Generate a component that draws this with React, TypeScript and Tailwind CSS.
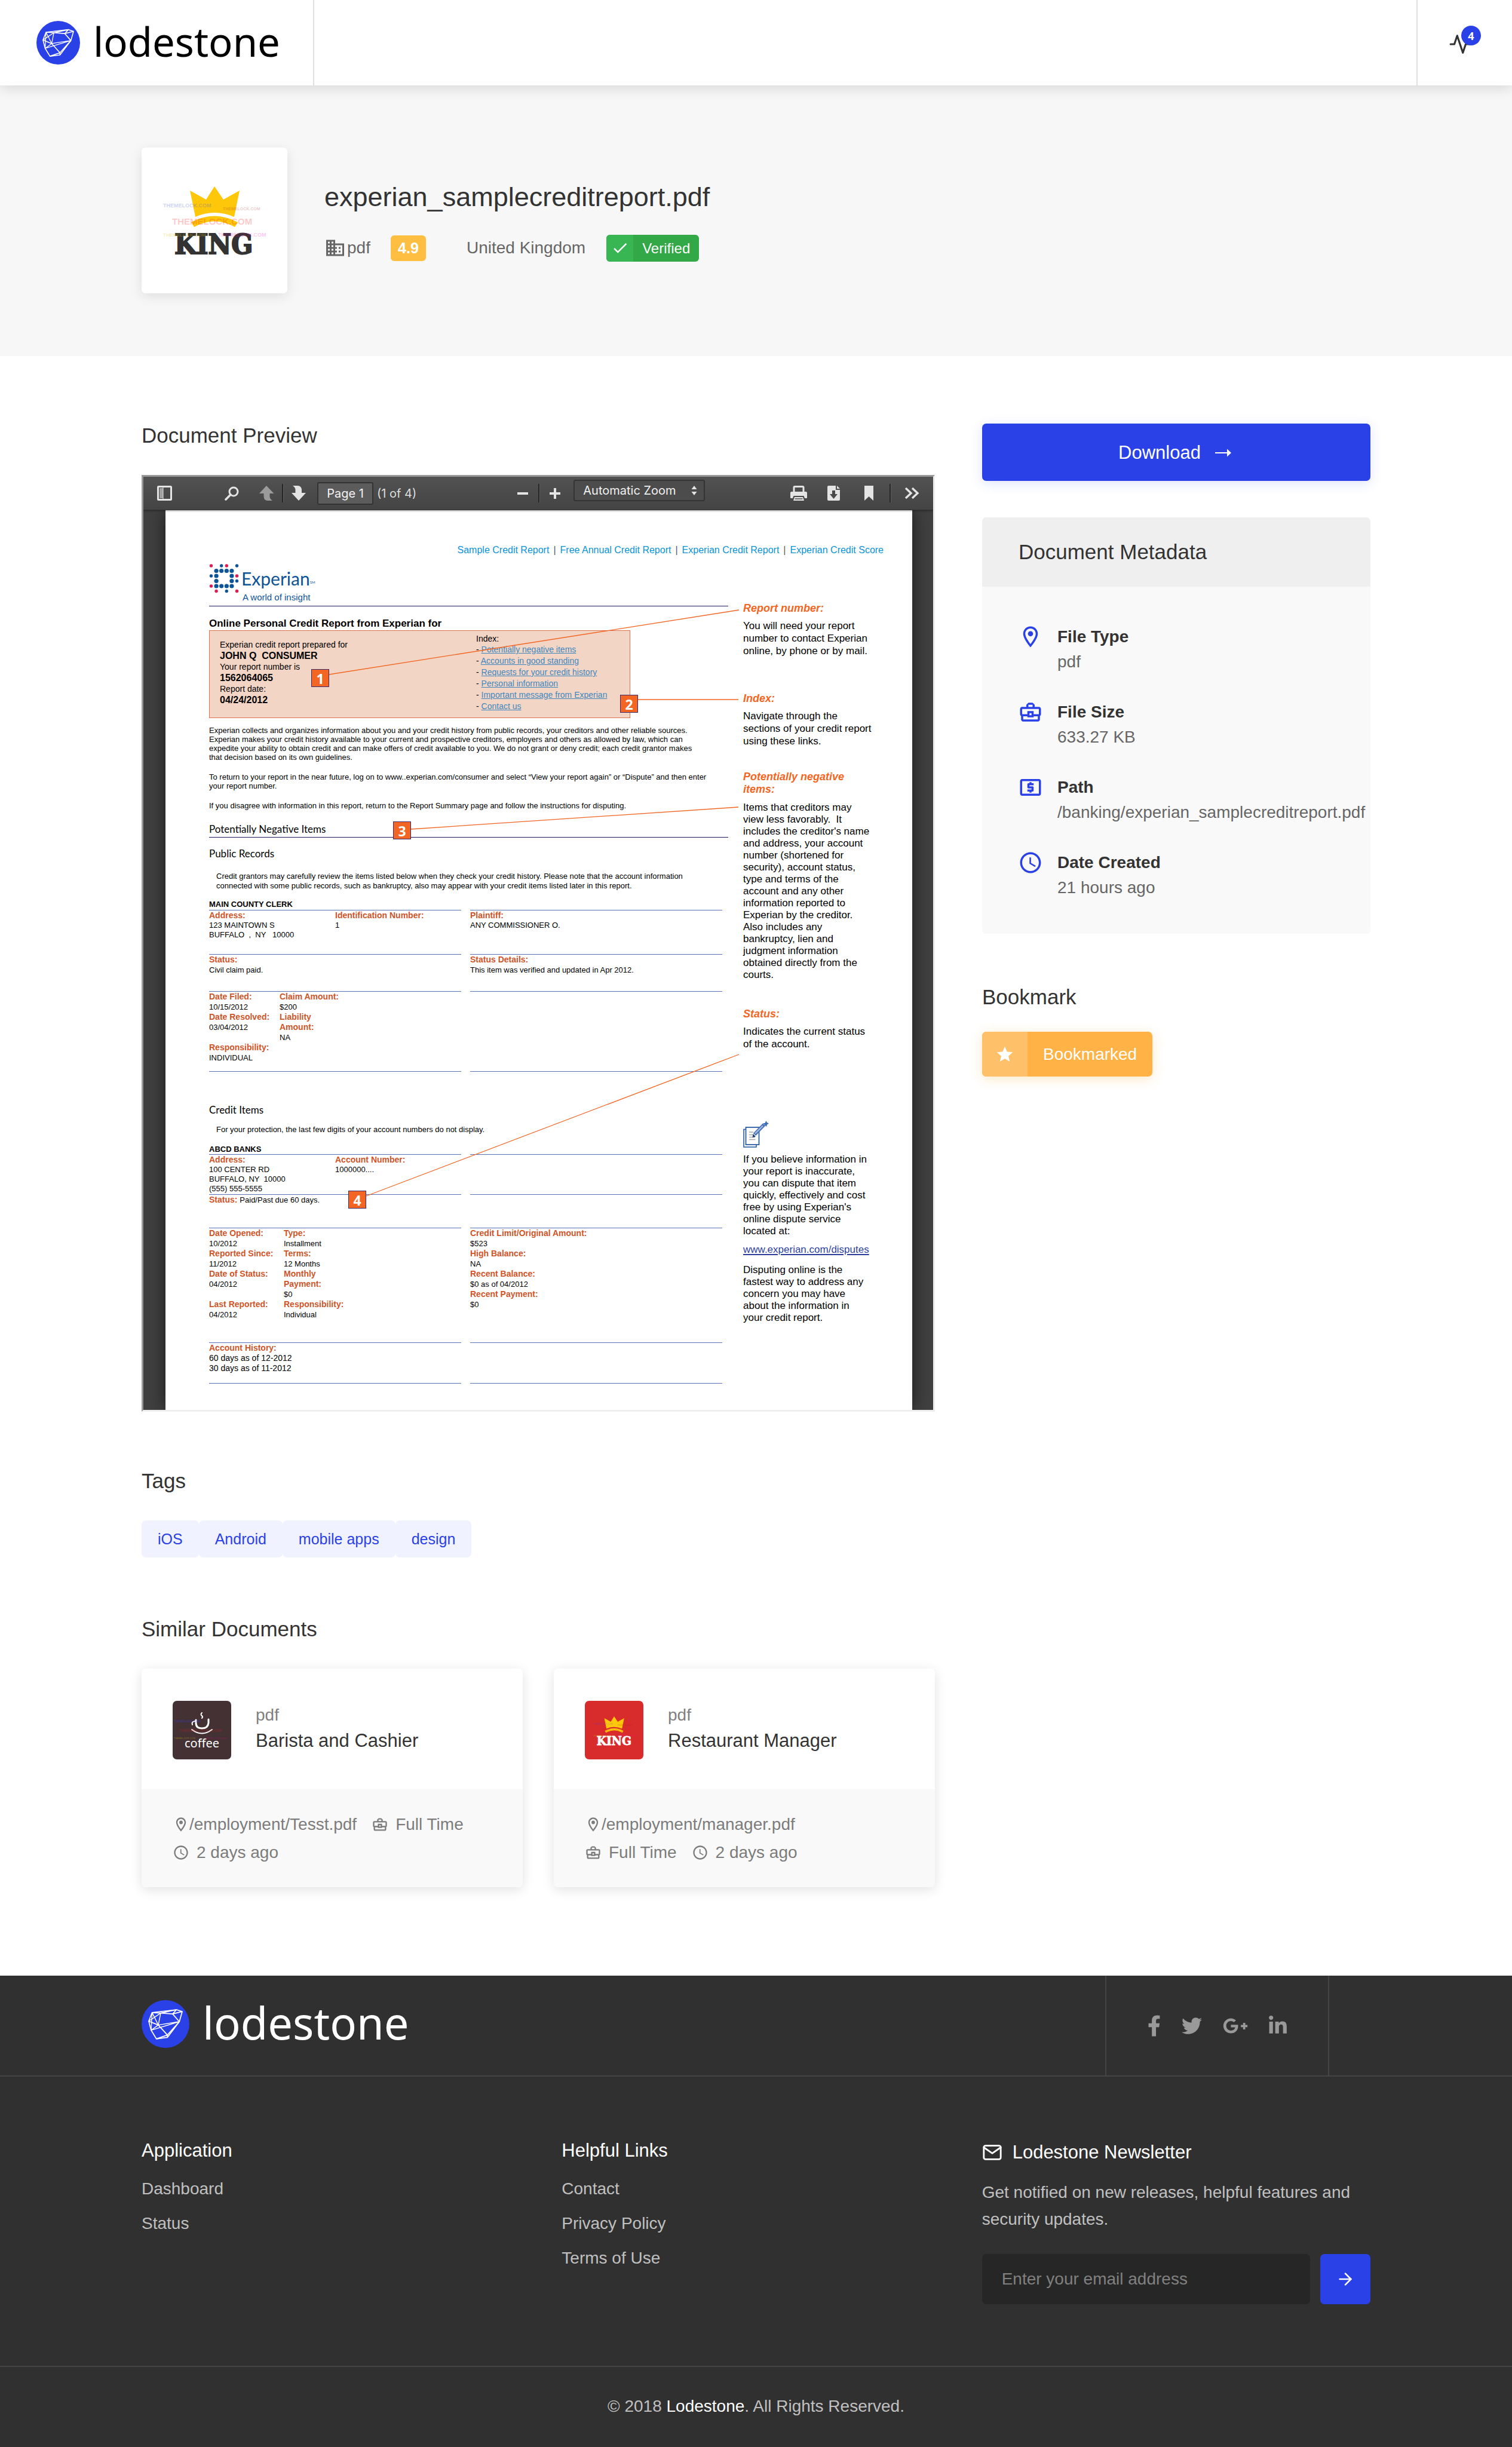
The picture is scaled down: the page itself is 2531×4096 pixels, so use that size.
import React from "react";
import { FaFacebookF, FaGooglePlusG, FaLinkedinIn, FaTwitter } from "react-icons/fa";
import { FiActivity, FiArrowRight, FiMail } from "react-icons/fi";
import {
  MdAccessTime,
  MdCheck,
  MdOutlineBusiness,
  MdOutlineBusinessCenter,
  MdOutlineLocalAtm,
  MdOutlineLocationOn,
  MdStar,
} from "react-icons/md";

/* ---------- logos and drawings ---------- */

function LodestoneMark({ className }: { className: string }) {
  return (
    <svg viewBox="0 0 100 100" className={className} aria-hidden="true">
      <circle cx="50" cy="50" r="50" fill="#2a41e8" />
      <g fill="none" stroke="#fff" strokeWidth="2.2" strokeLinejoin="round">
        <path d="M22 26 L73 20 L85 24 L79 45 L54 78 L31 81 L20 63 L15 44 Z" />
        <path d="M22 26 L40 27 L65 29 L85 24 M73 20 L65 29 L79 45 M40 27 L73 20" />
        <path d="M15 44 L40 27 L35 52 L22 26 L20 63 L35 52 L79 45 L20 63" strokeWidth="1.8" />
        <path d="M15 44 L35 52 L54 73 L79 45 M54 73 L31 81 M54 73 L54 78" />
      </g>
    </svg>
  );
}

function Wordmark({ dark }: { dark?: boolean }) {
  return dark ? (
    <span className="flex items-center gap-[22px]">
      <LodestoneMark className="size-[80px]" />
      <span className="pb-1 font-['Noto_Sans',sans-serif] text-[74px] leading-[80px] text-white">lodestone</span>
    </span>
  ) : (
    <span className="flex items-center gap-[22px]">
      <LodestoneMark className="size-[73px]" />
      <span className="pb-1 font-['Noto_Sans',sans-serif] text-[67px] leading-[73px] text-black">lodestone</span>
    </span>
  );
}

type KingProps = {
  className: string;
  background: string;
  ink: string;
  textSize: number;
  textX: number;
  textY: number;
};

function KingLogo({ className, background, ink, textSize, textX, textY }: KingProps) {
  return (
    <svg viewBox="0 0 244 244" className={className} role="img" aria-label="King">
      <rect width="244" height="244" fill={background} />
      <g fill="#fec70a">
        <path d="M81 72 L108 87 L122 65 L137 87 L164 72 L155 116 Q122 102 90 116 Z" />
        <path d="M83 125 Q122 104 161 125 L156 133 Q122 114 88 133 Z" />
      </g>
      <text
        x={textX}
        y={textY}
        fontFamily="'DejaVu Serif Condensed', 'DejaVu Serif', serif"
        fontWeight="700"
        fontSize={textSize}
        fill={ink}
        stroke={ink}
        strokeWidth="2"
      >
        KING
      </text>
      <g fontFamily="'Liberation Sans', sans-serif" fontWeight="700">
        <text x="36" y="100" fontSize="9" fill="#2a41e8" fillOpacity="0.25">THEMELOCK.COM</text>
        <text x="136" y="105" fontSize="7" fill="#a02020" fillOpacity="0.25">THEMELOCK.COM</text>
        <text x="51" y="129" fontSize="15" fill="#ff2020" fillOpacity="0.25">THEMELOCK.COM</text>
        <text x="36" y="149" fontSize="8" fill="#e0c000" fillOpacity="0.3">THEMELOCK.COM</text>
        <text x="128" y="149" fontSize="9" fill="#ff00c0" fillOpacity="0.25">THEMELOCK.COM</text>
      </g>
    </svg>
  );
}

function CoffeeLogo({ className }: { className: string }) {
  return (
    <svg viewBox="0 0 98 98" className={className} role="img" aria-label="Coffee">
      <rect width="98" height="98" fill="#443133" />
      <g fill="none" stroke="#fff" strokeWidth="3" strokeLinecap="round">
        <path d="M39 32 V37 Q39 46 49 46 Q59 46 60 37 V31" />
        <path d="M39 34 Q31 34 33 40" strokeWidth="2" />
        <path d="M32 48 Q49 61 66 48" strokeWidth="2" />
        <path d="M49 20 Q46 23 49 25 Q51 27 49 29" strokeWidth="2" />
      </g>
      <text x="20" y="78" fontFamily="'Noto Sans', sans-serif" fontSize="20" fill="#fff">coffee</text>
      <g fontFamily="'Liberation Sans', sans-serif" fontWeight="700">
        <text x="2" y="36" fontSize="5" fill="#2a41e8" fillOpacity="0.4">THEMELOCK.COM</text>
        <text x="10" y="52" fontSize="8" fill="#d02020" fillOpacity="0.3">THEMELOCK.COM</text>
        <text x="2" y="64" fontSize="4" fill="#e0c000" fillOpacity="0.3">THEMELOCK.COM</text>
        <text x="54" y="64" fontSize="4" fill="#d00090" fillOpacity="0.3">THEMELOCK.COM</text>
      </g>
    </svg>
  );
}

const dots: [number, number, string][] = [
  [0, 0, "r"], [2, 0, "b"], [3, 0, "r"], [5, 0, "b"],
  [1, 1, "B"], [2, 1, "B"], [3, 1, "B"], [4, 1, "B"],
  [0, 2, "b"], [1, 2, "B"], [4, 2, "B"], [5, 2, "r"],
  [1, 3, "B"], [4, 3, "B"], [5, 3, "b"],
  [0, 4, "r"], [1, 4, "B"], [2, 4, "B"], [3, 4, "B"], [4, 4, "B"],
  [1, 5, "r"], [3, 5, "b"], [5, 5, "r"],
];

function ExperianDots() {
  return (
    <svg viewBox="0 0 50 49" className="h-[49px] w-[50px]" aria-hidden="true">
      {dots.map(([c, r, kind]) => (
        <circle
          key={`${c}-${r}`}
          cx={3.5 + c * 8.6}
          cy={3 + r * 8.5}
          r={kind === "B" ? 3.6 : 2.7}
          fill={kind === "r" ? "#e11b54" : "#0d5498"}
        />
      ))}
    </svg>
  );
}

function DisputeIcon() {
  return (
    <svg viewBox="0 0 43 45" className="h-[45px] w-[43px]" aria-hidden="true">
      <rect x="1" y="14.500" width="21" height="29.500" fill="#fff" stroke="#2b5ea6" strokeWidth="1.600" />
      <rect x="4.500" y="11" width="22" height="29" fill="#fff" stroke="#2b5ea6" strokeWidth="1.800" />
      <path d="M10 19 H17 M10 23.500 H17 M10 27.500 H20 M10 31.500 H20.500" stroke="#a8a8a8" strokeWidth="1.600" />
      <path d="M19 23 L35 6.500" stroke="#4a72b8" strokeWidth="6" />
      <path d="M20 21.500 L33 8.500" stroke="#a9bde0" strokeWidth="2" />
      <path d="M15.500 28 L16.500 22 L21 26.500 Z" fill="#1e3f7c" />
      <path d="M33 4 L36.500 4 L38.500 0 L40 3 L43 4.500 L40 6.500 L39 10 Z" fill="#3f6bbb" />
    </svg>
  );
}

/* ---------- document page ---------- */

const bodyText = "text-[13px] whitespace-pre";
const label = "text-[14px] leading-[17px] font-bold text-[#cf5428] whitespace-pre";

type Line = { t?: string; v?: string; big?: boolean; tight?: boolean };

function Fields({ lines }: { lines: Line[] }) {
  return (
    <div>
      {lines.map((l, i) =>
        l.t !== undefined ? (
          <p key={i} className={label}>{l.t}</p>
        ) : l.big ? (
          <p key={i} className="text-[14px] leading-[17px] whitespace-pre">{l.v}</p>
        ) : l.tight ? (
          <p key={i} className="text-[13px] leading-4 whitespace-pre">{l.v}</p>
        ) : (
          <p key={i} className="min-h-[17px] text-[13px] leading-[17px] whitespace-pre">{l.v}</p>
        ),
      )}
    </div>
  );
}

function RecordRow({ className, left, right }: { className: string; left?: React.ReactNode; right?: React.ReactNode }) {
  return (
    <div className={`grid grid-cols-2 gap-[15px] pr-[10px] ${className}`}>
      <div className="border-t border-[#5b74b9]">{left}</div>
      <div className="border-t border-[#5b74b9]">{right}</div>
    </div>
  );
}

function SideNote({ title, children, className }: { title: string; children: string; className: string }) {
  return (
    <div className={className}>
      <h4 className="text-[18px] leading-[21px] font-bold whitespace-pre text-[#f26522] italic">{title}</h4>
      <p className="mt-2 text-[17px] leading-[21px] whitespace-pre">{children}</p>
    </div>
  );
}

const headerLinks = ["Sample Credit Report", "Free Annual Credit Report", "Experian Credit Report", "Experian Credit Score"];
const indexLinks = [
  "Potentially negative items",
  "Accounts in good standing",
  "Requests for your credit history",
  "Personal information",
  "Important message from Experian",
  "Contact us",
];

const callout =
  "absolute flex size-[30px] items-center justify-center border border-[#3b2a6b] bg-[#f26522] pt-[2px] font-['Open_Sans',sans-serif] text-[23px] leading-none font-bold text-white";

function ReportPage() {
  return (
    <article className="relative min-w-0 flex-1 bg-white pt-[57px] pr-12 pb-[44px] pl-[73px] text-black shadow-[0_0_28px_rgba(0,0,0,0.6)]">
      <nav className="flex justify-end gap-[7px] text-[16px] leading-5" aria-label="Report links">
        {headerLinks.map((text, i) => (
          <React.Fragment key={text}>
            {i > 0 && <span className="text-[#555]">|</span>}
            <a href="#report" className="text-[#0a93d8]">{text}</a>
          </React.Fragment>
        ))}
      </nav>

      <div className="flex justify-between">
        <div className="w-[869px]">
          <div className="mt-[13px] flex h-[71px] gap-[3px] border-b border-[#1b1464]">
            <ExperianDots />
            <div className="text-[#0d5498]">
              <p className="pl-[1px] font-['Lato',sans-serif] text-[30px] leading-[48px]">
                Experian<sup className="text-[6px]">SM</sup>
              </p>
              <p className="pl-[3px] text-[15px] leading-4">A world of insight</p>
            </div>
          </div>

          <h3 className="mt-[19px] text-[17px] leading-5 font-bold">Online Personal Credit Report from Experian for</h3>
          <div className="mt-[1px] flex h-[147px] w-[705px] border border-[#dd7250] bg-[#f2d5c5]">
            <div className="w-[446px] pt-[14px] pl-[17px] whitespace-pre">
              <p className="text-[14px] leading-[19px]">Experian credit report prepared for</p>
              <p className="text-[16px] leading-[18px] font-bold">JOHN Q  CONSUMER</p>
              <p className="text-[14px] leading-[19px]">Your report number is</p>
              <p className="text-[16px] leading-[18px] font-bold">1562064065</p>
              <p className="text-[14px] leading-[19px]">Report date:</p>
              <p className="text-[16px] leading-[18px] font-bold">04/24/2012</p>
            </div>
            <div className="pt-1">
              <p className="text-[14px] leading-[18px]">Index:</p>
              <ul className="text-[14px] leading-[19px]">
                {indexLinks.map((t) => (
                  <li key={t}>
                    - <a href="#report" className="text-[#3f87bf] underline">{t}</a>
                  </li>
                ))}
              </ul>
            </div>
          </div>

          <p className={`mt-[13px] leading-[15px] ${bodyText}`}>
            {"Experian collects and organizes information about you and your credit history from public records, your creditors and other reliable sources.\nExperian makes your credit history available to your current and prospective creditors, employers and others as allowed by law, which can\nexpedite your ability to obtain credit and can make offers of credit available to you. We do not grant or deny credit; each credit grantor makes\nthat decision based on its own guidelines."}
          </p>
          <p className={`mt-[18px] leading-[15px] ${bodyText}`}>
            {"To return to your report in the near future, log on to www..experian.com/consumer and select “View your report again” or “Dispute” and then enter\nyour report number."}
          </p>
          <p className={`mt-[18px] leading-[15px] ${bodyText}`}>
            If you disagree with information in this report, return to the Report Summary page and follow the instructions for disputing.
          </p>

          <h3 className="mt-[22px] border-b border-[#1b1464] pb-[3px] font-['Lato',sans-serif] text-[17px] leading-5">
            Potentially Negative Items
          </h3>
          <h4 className="mt-[17px] font-['Lato',sans-serif] text-[17px] leading-5">Public Records</h4>
          <p className={`mt-5 ml-3 leading-4 ${bodyText}`}>
            {"Credit grantors may carefully review the items listed below when they check your credit history. Please note that the account information\nconnected with some public records, such as bankruptcy, also may appear with your credit items listed later in this report."}
          </p>

          <h5 className="mt-[15px] mb-[2px] text-[13px] leading-[15px] font-bold">MAIN COUNTY CLERK</h5>
          <RecordRow
            className="min-h-[74px]"
            left={
              <div className="grid grid-cols-2">
                <Fields lines={[{ t: "Address:" }, { v: "123 MAINTOWN S", tight: true }, { v: "BUFFALO  ,  NY   10000", tight: true }]} />
                <Fields lines={[{ t: "Identification Number:" }, { v: "1", tight: true }]} />
              </div>
            }
            right={<Fields lines={[{ t: "Plaintiff:" }, { v: "ANY COMMISSIONER O.", tight: true }]} />}
          />
          <RecordRow
            className="min-h-[62px]"
            left={<Fields lines={[{ t: "Status:" }, { v: "Civil claim paid." }]} />}
            right={<Fields lines={[{ t: "Status Details:" }, { v: "This item was verified and updated in Apr 2012." }]} />}
          />
          <RecordRow
            className="min-h-[134px]"
            left={
              <div className="grid grid-cols-[118px_1fr]">
                <Fields
                  lines={[
                    { t: "Date Filed:" }, { v: "10/15/2012" }, { t: "Date Resolved:" }, { v: "03/04/2012" },
                    { v: "" }, { t: "Responsibility:" }, { v: "INDIVIDUAL" },
                  ]}
                />
                <Fields lines={[{ t: "Claim Amount:" }, { v: "$200" }, { t: "Liability" }, { t: "Amount:" }, { v: "NA" }]} />
              </div>
            }
          />
          <RecordRow className="" />

          <h4 className="mt-[54px] font-['Lato',sans-serif] text-[17px] leading-5">Credit Items</h4>
          <p className={`mt-[15px] ml-3 leading-4 ${bodyText}`}>
            For your protection, the last few digits of your account numbers do not display.
          </p>

          <h5 className="mt-[17px] mb-[1px] text-[13px] leading-[15px] font-bold">ABCD BANKS</h5>
          <RecordRow
            className="min-h-[67px]"
            left={
              <div className="grid grid-cols-2">
                <Fields
                  lines={[
                    { t: "Address:" }, { v: "100 CENTER RD", tight: true }, { v: "BUFFALO, NY  10000", tight: true },
                    { v: "(555) 555-5555", tight: true },
                  ]}
                />
                <Fields lines={[{ t: "Account Number:" }, { v: "1000000....", tight: true }]} />
              </div>
            }
          />
          <RecordRow
            className="min-h-[56px]"
            left={
              <p className={label}>
                Status: <span className="text-[13px] font-normal text-black">Paid/Past due 60 days.</span>
              </p>
            }
          />
          <RecordRow
            className="min-h-[192px]"
            left={
              <div className="grid grid-cols-[125px_1fr]">
                <Fields
                  lines={[
                    { t: "Date Opened:" }, { v: "10/2012" }, { t: "Reported Since:" }, { v: "11/2012" },
                    { t: "Date of Status:" }, { v: "04/2012" }, { v: "" }, { t: "Last Reported:" }, { v: "04/2012" },
                  ]}
                />
                <Fields
                  lines={[
                    { t: "Type:" }, { v: "Installment" }, { t: "Terms:" }, { v: "12 Months" }, { t: "Monthly" },
                    { t: "Payment:" }, { v: "$0" }, { t: "Responsibility:" }, { v: "Individual" },
                  ]}
                />
              </div>
            }
            right={
              <Fields
                lines={[
                  { t: "Credit Limit/Original Amount:" }, { v: "$523" }, { t: "High Balance:" }, { v: "NA" },
                  { t: "Recent Balance:" }, { v: "$0 as of 04/2012" }, { t: "Recent Payment:" }, { v: "$0" },
                ]}
              />
            }
          />
          <RecordRow
            className="min-h-[68px]"
            left={
              <Fields
                lines={[{ t: "Account History:" }, { v: "60 days as of 12-2012", big: true }, { v: "30 days as of 11-2012", big: true }]}
              />
            }
          />
          <RecordRow className="" />
        </div>

        <aside className="w-[235px] pt-[77px]">
          <SideNote title="Report number:" className="">
            {"You will need your report\nnumber to contact Experian\nonline, by phone or by mail."}
          </SideNote>
          <SideNote title="Index:" className="mt-[59px]">
            {"Navigate through the\nsections of your credit report\nusing these links."}
          </SideNote>
          <h4 className="mt-[39px] text-[18px] leading-[21px] font-bold whitespace-pre text-[#f26522] italic">
            {"Potentially negative\nitems:"}
          </h4>
          <p className="mt-[10px] text-[17px] leading-5 whitespace-pre">
            {"Items that creditors may\nview less favorably.  It\nincludes the creditor's name\nand address, your account\nnumber (shortened for\nsecurity), account status,\ntype and terms of the\naccount and any other\ninformation reported to\nExperian by the creditor.\nAlso includes any\nbankruptcy, lien and\njudgment information\nobtained directly from the\ncourts."}
          </p>
          <SideNote title="Status:" className="mt-[45px]">
            {"Indicates the current status\nof the account."}
          </SideNote>
          <div className="mt-[118px]">
            <DisputeIcon />
          </div>
          <p className="mt-[10px] text-[17px] leading-5 whitespace-pre">
            {"If you believe information in\nyour report is inaccurate,\nyou can dispute that item\nquickly, effectively and cost\nfree by using Experian's\nonline dispute service\nlocated at:"}
          </p>
          <a href="#report" className="mt-[10px] block text-[17px] leading-[21px] whitespace-pre text-[#2e3f9e] underline decoration-2 underline-offset-2">
            www.experian.com/disputes
          </a>
          <p className="mt-[14px] text-[17px] leading-5 whitespace-pre">
            {"Disputing online is the\nfastest way to address any\nconcern you may have\nabout the information in\nyour credit report."}
          </p>
        </aside>
      </div>

      <svg className="pointer-events-none absolute inset-0 size-full" aria-hidden="true">
        <g stroke="#f26522" strokeWidth="1.300">
          <line x1="274" y1="275" x2="960" y2="167" />
          <line x1="791" y1="317" x2="959" y2="317" />
          <line x1="410" y1="534" x2="959" y2="497" />
          <line x1="336" y1="1148" x2="960" y2="911" />
        </g>
      </svg>
      <span className={`${callout} top-[266px] left-[244px]`}>1</span>
      <span className={`${callout} top-[309px] left-[761px]`}>2</span>
      <span className={`${callout} top-[521px] left-[381px]`}>3</span>
      <span className={`${callout} top-[1139px] left-[306px]`}>4</span>
    </article>
  );
}

function ToolbarDivider({ className }: { className: string }) {
  return <span className={`h-[31px] w-[3px] border-r border-[#5e5e5e] bg-[#262626] ${className}`} />;
}

function ViewerToolbar() {
  return (
    <div className="relative z-10 flex h-14 items-center border-b border-[#333] bg-gradient-to-b from-[#525252] to-[#444] font-['Inter',sans-serif] text-[20px] text-[#dddddd] shadow-[0_1px_3px_rgba(0,0,0,0.4)]">
      <button aria-label="Toggle sidebar" className="ml-[23px]">
        <svg viewBox="0 0 25 25" className="size-[25px]">
          <rect x="1.500" y="1.500" width="22" height="22" rx="1" fill="none" stroke="#e4e4e4" strokeWidth="3" />
          <rect x="4" y="4" width="6" height="17" fill="#a0a0a0" />
          <path d="M10 3 V22" stroke="#e4e4e4" strokeWidth="1" />
        </svg>
      </button>
      <button aria-label="Find in document" className="ml-[88px]">
        <svg viewBox="0 0 24 24" className="size-6" fill="none" stroke="#e4e4e4" strokeLinecap="round">
          <circle cx="15" cy="9" r="7" strokeWidth="3" />
          <path d="M10 14 L2 22" strokeWidth="3.600" />
        </svg>
      </button>
      <button aria-label="Previous page" className="ml-[34px]">
        <svg viewBox="0 0 25 25" className="size-[25px]" fill="#9b9b9b">
          <path d="M12 0 L24.500 13 H17.500 V18 Q17.500 22 22 25 H14 Q7.500 25 7.500 17 V13 H0 Z" />
        </svg>
      </button>
      <ToolbarDivider className="ml-[13px]" />
      <button aria-label="Next page" className="ml-[12px]">
        <svg viewBox="0 0 25 25" className="size-[25px]" fill="#e4e4e4">
          <path d="M13 25 L25 12 H18 V8 Q18 0 11 0 H3 Q7.500 3 7.500 7 V12 H1 Z" />
        </svg>
      </button>
      <input
        aria-label="Page"
        defaultValue="Page 1"
        className="ml-[19px] h-[38px] w-[94px] rounded-[3px] border-2 border-[#333] bg-[#5c5c5c] text-center text-[20px] text-[#f2f2f2]"
      />
      <span className="ml-[6px] whitespace-pre">(1 of 4)</span>

      <button aria-label="Zoom out" className="ml-[169px]">
        <svg viewBox="0 0 18 18" className="size-[18px]"><path d="M0 9 H18" stroke="#e4e4e4" strokeWidth="4" /></svg>
      </button>
      <ToolbarDivider className="ml-[17px]" />
      <button aria-label="Zoom in" className="ml-[16px]">
        <svg viewBox="0 0 18 18" className="size-[18px]"><path d="M0 9 H18 M9 0 V18" stroke="#e4e4e4" strokeWidth="4" /></svg>
      </button>
      <label className="relative ml-[22px] mb-[10px] block">
        <select
          aria-label="Zoom level"
          className="h-[36px] w-[220px] appearance-none rounded-[3px] border-2 border-[#343434] bg-[#4c4c4c] pl-[14px] text-[20px] leading-[30px] text-[#f0f0f0]"
        >
          <option>Automatic Zoom</option>
        </select>
        <svg viewBox="0 0 10 16" className="pointer-events-none absolute top-[10px] right-[13px] h-4 w-[10px]" fill="#e4e4e4">
          <path d="M5 0 L9.500 6 H0.500 Z M5 16 L9.500 10 H0.500 Z" />
        </svg>
      </label>

      <div className="ml-auto flex items-center pr-[23px]">
        <button aria-label="Print">
          <svg viewBox="0 0 28 25" className="h-[25px] w-7">
            <path d="M6 10 V3 Q6 1.500 7.500 1.500 H20.500 Q22 1.500 22 3 V10" fill="none" stroke="#e4e4e4" strokeWidth="3" />
            <path d="M2 10 H26 Q28 10 28 12 V20 Q28 21 27 21 H24 L22.500 17 H5.500 L4 21 H1 Q0 21 0 20 V12 Q0 10 2 10 Z" fill="#e4e4e4" />
            <path d="M7 19 H21 L23 25 H5 Z" fill="#e4e4e4" />
            <path d="M7.500 22 H20.500" stroke="#4a4a4a" strokeWidth="1.500" />
          </svg>
        </button>
        <button aria-label="Save" className="ml-[34px]">
          <svg viewBox="0 0 22 25" className="h-[25px] w-[22px]">
            <path d="M2 0 H14 V7 H21 V23 Q21 25 19 25 H2 Q0 25 0 23 V2 Q0 0 2 0 Z M16 0 L21 5 H16 Z" fill="#e4e4e4" />
            <path d="M8 8 H13 V14 H17 L10.500 22 L4 14 H8 Z" fill="#4a4a4a" />
          </svg>
        </button>
        <button aria-label="Bookmark view" className="ml-[40px]">
          <svg viewBox="0 0 15 25" className="h-[25px] w-[15px]"><path d="M0 0 H15 V25 L7.500 18 L0 25 Z" fill="#e4e4e4" /></svg>
        </button>
        <ToolbarDivider className="ml-[27px]" />
        <button aria-label="Tools" className="ml-[22px]">
          <svg viewBox="0 0 25 19" className="h-[19px] w-[25px]" fill="none" stroke="#e4e4e4" strokeWidth="3.400">
            <path d="M2 1 L11 9.500 L2 18 M13 1 L22 9.500 L13 18" />
          </svg>
        </button>
      </div>
    </div>
  );
}

function DocumentViewer() {
  return (
    <div className="overflow-hidden border-[3px] border-t-[#999] border-r-[#eee] border-b-[#eee] border-l-[#999] bg-[#404040]">
      <ViewerToolbar />
      <div className="flex pr-[35px] pl-[37px]">
        <ReportPage />
      </div>
    </div>
  );
}

/* ---------- page sections ---------- */

const sectionTitle = "text-[35px] leading-[52px] text-[#333]";

function Header() {
  return (
    <header className="relative z-20 flex h-[143px] justify-between bg-white shadow-[0_4px_22px_rgba(0,0,0,0.14)]">
      <a href="#home" className="flex w-[526px] items-center border-r-2 border-[#e0e0e0] pl-[61px]" aria-label="Lodestone home">
        <Wordmark />
      </a>
      <div className="flex w-[160px] border-l-2 border-[#e0e0e0]">
        <button className="relative mt-[55px] ml-[52px] size-[38px] text-[#333]" aria-label="Activity, 4 new">
          <FiActivity className="size-[38px]" />
          <span className="absolute -top-3 left-[21px] flex size-[33px] items-center justify-center rounded-full bg-[#2a41e8] font-['Open_Sans',sans-serif] text-[18px] leading-none font-bold text-white">
            4
          </span>
        </button>
      </div>
    </header>
  );
}

function Hero() {
  return (
    <section className="bg-[#f7f7f7] pt-[104px] pb-[105px]">
      <div className="mx-auto flex max-w-[2057px] items-center gap-[62px]">
        <div className="size-[244px] overflow-hidden rounded-[7px] bg-white shadow-[0_5px_20px_rgba(0,0,0,0.1)]">
          <KingLogo className="size-full" background="#ffffff" ink="#333333" textSize={47} textX={55} textY={178} />
        </div>
        <div className="pt-[2px]">
          <h1 className="text-[45px] leading-[54px] text-[#333]">experian_samplecreditreport.pdf</h1>
          <div className="mt-9 flex h-[45px] items-center text-[28px] leading-[42px] text-[#666]">
            <MdOutlineBusiness className="size-9" />
            <span className="ml-[2px]">pdf</span>
            <span className="ml-[34px] flex h-[43px] w-[59px] items-center justify-center rounded-[6px] bg-[#febe42] text-[25px] font-bold text-white">
              4.9
            </span>
            <span className="ml-[68px]">United Kingdom</span>
            <span className="ml-[35px] flex h-[45px] overflow-hidden rounded-[6px] bg-[#32a846] text-[24px] leading-[45px] text-white">
              <span className="flex w-[45px] items-center justify-center bg-[#38b653]">
                <MdCheck className="size-[30px]" />
              </span>
              <span className="px-[15px]">Verified</span>
            </span>
          </div>
        </div>
      </div>
    </section>
  );
}

function Meta({ icon, children }: { icon: React.ReactNode; children: React.ReactNode }) {
  return (
    <li className="mr-[25px] flex items-center">
      {icon}
      {children}
    </li>
  );
}

function SimilarCard({ logo, title, path }: { logo: React.ReactNode; title: string; path: string }) {
  return (
    <a href="#document" className="block overflow-hidden rounded-[7px] bg-white shadow-[0_4px_20px_rgba(0,0,0,0.12)]">
      <div className="flex gap-[41px] pt-[54px] pr-[52px] pb-[50px] pl-[52px]">
        <div className="size-[98px] overflow-hidden rounded-[7px]">{logo}</div>
        <div className="pt-[3px]">
          <p className="text-[28px] leading-[42px] text-[#808080]">pdf</p>
          <h3 className="text-[31px] leading-[44px] text-[#333]">{title}</h3>
        </div>
      </div>
      <ul className="flex flex-wrap bg-[#f9f9f9] px-[52px] py-[35px] text-[28px] leading-[47px] text-[#7c7c7c]">
        <Meta icon={<MdOutlineLocationOn className="size-7" />}>{path}</Meta>
        <Meta icon={<MdOutlineBusinessCenter className="mr-[12px] size-7" />}>Full Time</Meta>
        <Meta icon={<MdAccessTime className="mr-[12px] size-7" />}>2 days ago</Meta>
      </ul>
    </a>
  );
}

const metadata = [
  { Icon: MdOutlineLocationOn, name: "File Type", value: "pdf" },
  { Icon: MdOutlineBusinessCenter, name: "File Size", value: "633.27 KB" },
  { Icon: MdOutlineLocalAtm, name: "Path", value: "/banking/experian_samplecreditreport.pdf" },
  { Icon: MdAccessTime, name: "Date Created", value: "21 hours ago" },
];

function Sidebar() {
  return (
    <aside className="pt-[6px]">
      <button className="flex h-24 w-full items-center justify-center gap-6 rounded-[7px] bg-[#2a41e8] pt-[2px] text-[31px] text-white shadow-[0_4px_20px_rgba(42,65,232,0.15)]">
        Download
        <svg viewBox="0 0 32 14" className="h-[14px] w-[32px]" aria-hidden="true">
          <path d="M0 6 H20 V0.500 L27 7 L20 13.500 V8 H0 Z" fill="#fff" />
        </svg>
      </button>

      <section className="mt-[61px] overflow-hidden rounded-[7px] bg-[#f9f9f9]">
        <h2 className="bg-[#efefef] px-[61px] py-8 text-[35px] leading-[52px] text-[#333]">Document Metadata</h2>
        <dl className="flex flex-col gap-[42px] pt-[63px] pb-[56px] pl-[60px]">
          {metadata.map(({ Icon, name, value }) => (
            <div key={name} className="grid grid-cols-[42px_1fr] gap-x-6 text-[28px] leading-[42px]">
              <Icon className="size-[42px] text-[#2a41e8]" />
              <dt className="font-bold text-[#333]">{name}</dt>
              <dd className="col-start-2 whitespace-nowrap text-[#666]">{value}</dd>
            </div>
          ))}
        </dl>
      </section>

      <h2 className={`mt-20 ${sectionTitle}`}>Bookmark</h2>
      <button className="mt-8 flex h-[75px] items-stretch overflow-hidden rounded-[7px] bg-[#ffb245] text-[28px] text-white shadow-[0_4px_20px_rgba(255,178,69,0.3)]">
        <span className="flex w-[76px] items-center justify-center bg-[#ffc06a]">
          <MdStar className="size-8" />
        </span>
        <span className="flex items-center px-[26px]">Bookmarked</span>
      </button>
    </aside>
  );
}

function Main() {
  return (
    <main className="mx-auto grid max-w-[2057px] grid-cols-[1fr_650px] gap-[79px] pt-[107px] pb-[148px]">
      <div>
        <h2 className={`mb-10 ${sectionTitle}`}>Document Preview</h2>
        <DocumentViewer />

        <h2 className={`mt-[90px] mb-10 ${sectionTitle}`}>Tags</h2>
        <div className="flex text-[25px] leading-[62px] text-[#2a41e8]">
          {["iOS", "Android", "mobile apps", "design"].map((tag) => (
            <a key={tag} href="#tag" className="rounded-[7px] bg-[#f0f2ff] px-[27px]">{tag}</a>
          ))}
        </div>

        <h2 className={`mt-[94px] mb-10 ${sectionTitle}`}>Similar Documents</h2>
        <div className="grid grid-cols-2 gap-[52px]">
          <SimilarCard logo={<CoffeeLogo className="size-full" />} title="Barista and Cashier" path="/employment/Tesst.pdf" />
          <SimilarCard
            logo={<KingLogo className="size-full" background="#d82b2b" ink="#ffffff" textSize={52} textX={49} textY={183} />}
            title="Restaurant Manager"
            path="/employment/manager.pdf"
          />
        </div>
      </div>
      <Sidebar />
    </main>
  );
}

function LinkColumn({ title, links }: { title: string; links: string[] }) {
  return (
    <nav aria-label={title}>
      <h3 className="text-[31px] leading-[42px] text-white">{title}</h3>
      <ul className="mt-[22px] flex flex-col gap-4 text-[28px] leading-[42px]">
        {links.map((l) => (
          <li key={l}><a href="#link">{l}</a></li>
        ))}
      </ul>
    </nav>
  );
}

function Footer() {
  return (
    <footer className="bg-[#303030] text-[#c0c0c0]">
      <div className="border-b-2 border-[#444]">
        <div className="mx-auto flex h-[167px] max-w-[2057px] justify-between">
          <a href="#home" className="flex items-center pb-[6px]" aria-label="Lodestone home">
            <Wordmark dark />
          </a>
          <div className="mr-[69px] flex w-[375px] items-center justify-center gap-[35px] border-x-2 border-[#444] text-[#999]">
            <a href="#facebook" aria-label="Facebook"><FaFacebookF className="h-[36px] w-[22px]" /></a>
            <a href="#twitter" aria-label="Twitter"><FaTwitter className="h-[34px] w-[34px]" /></a>
            <a href="#google" aria-label="Google Plus"><FaGooglePlusG className="h-[34px] w-[42px]" /></a>
            <a href="#linkedin" aria-label="LinkedIn"><FaLinkedinIn className="h-[34px] w-[30px]" /></a>
          </div>
        </div>
      </div>

      <div className="mx-auto grid max-w-[2057px] grid-cols-3 gap-[53px] pt-[103px] pb-[103px]">
        <LinkColumn title="Application" links={["Dashboard", "Status"]} />
        <LinkColumn title="Helpful Links" links={["Contact", "Privacy Policy", "Terms of Use"]} />
        <div className="pt-[3px]">
          <h3 className="flex items-center gap-[17px] text-[31px] leading-[42px] text-white">
            <FiMail className="size-[34px]" />
            Lodestone Newsletter
          </h3>
          <p className="mt-[23px] text-[28px] leading-[45px]">
            Get notified on new releases, helpful features and security updates.
          </p>
          <form className="mt-9 flex gap-[17px]" onSubmit={(e) => e.preventDefault()}>
            <input
              type="email"
              aria-label="Email address"
              placeholder="Enter your email address"
              className="h-[84px] min-w-0 flex-1 rounded-[7px] bg-[#262626] px-[33px] text-[28px] text-white placeholder:text-[#808080]"
            />
            <button aria-label="Subscribe" className="flex size-[84px] items-center justify-center rounded-[7px] bg-[#2a41e8] text-white">
              <FiArrowRight className="size-8" />
            </button>
          </form>
        </div>
      </div>

      <div className="border-t-2 border-[#444] pt-[45px] pb-[47px] text-center text-[28px] leading-[42px]">
        © 2018 <strong className="font-normal text-white">Lodestone</strong>. All Rights Reserved.
      </div>
    </footer>
  );
}

export default function App() {
  return (
    <div className="bg-white font-['Liberation_Sans',Arial,sans-serif]">
      <Header />
      <Hero />
      <Main />
      <Footer />
    </div>
  );
}
